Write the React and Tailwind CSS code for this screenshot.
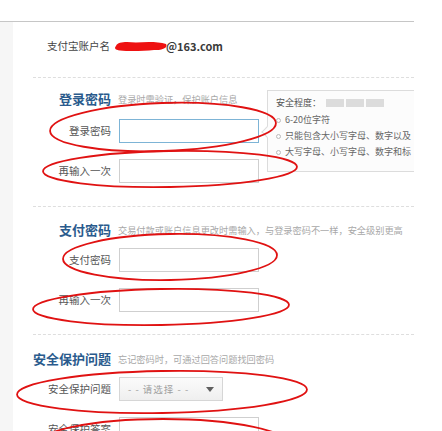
const FONT = '"Noto Sans CJK SC", "Liberation Sans", sans-serif'

function Field({ label, focus, select }) {
  return (
    <div className="flex items-center h-[24px]">
      <span className="w-[98px] shrink-0 text-right text-[10.5px] leading-[14px] text-[#555]">{label}</span>
      {select ? (
        <div className="ml-[8px] w-[104px] h-[24px] border border-[#d6d6d6] bg-gradient-to-b from-[#fbfbfb] to-[#efefef] flex items-center justify-between pl-[8px] pr-[8px]">
          <span className="text-[9.5px] text-[#a0a0a0] tracking-[1px]">- - 请选择 - -</span>
          <span className="w-0 h-0 border-l-[4px] border-r-[4px] border-t-[5px] border-l-transparent border-r-transparent border-t-[#606060]" />
        </div>
      ) : (
        <div className={`ml-[8px] w-[140px] h-[24px] bg-white border ${focus ? 'border-[#7db4d6]' : 'border-[#cfcfcf]'}`} />
      )}
    </div>
  )
}

function Heading({ title, desc }) {
  return (
    <div className="flex items-center h-[16px]">
      <span className="w-[98px] shrink-0 text-right text-[13px] font-bold leading-[16px] text-[#2a5b8d]">{title}</span>
      <span className="ml-[7px] text-[9.2px] leading-[12px] text-[#a8a8a8] whitespace-nowrap">{desc}</span>
    </div>
  )
}

function Dashed() {
  return <div className="ml-[20px] border-t border-dashed border-[#dedede]" />
}

export default function App() {
  return (
    <div className="relative w-[442px] h-[431px] overflow-hidden bg-white pt-[21px]" style={{ fontFamily: FONT }}>
      <div className="w-[414px] h-full border-t border-[#c6c6c6] flex">
        <div className="w-[13px] shrink-0 bg-[#f6f6f6]" />
        <div className="flex-1 overflow-hidden relative">
          {/* account */}
          <div className="h-[55px] pt-[17px] pl-[34px] flex items-start">
            <div className="flex items-center h-[14px]">
              <span className="text-[10.5px] text-[#444]">支付宝账户名</span>
              <svg className="ml-[4px]" width="54" height="12" viewBox="0 0 54 12">
                <path d="M2 6 C4 1 14 2 22 2.5 C32 2 44 1.5 52 4 C54 7 50 10.5 40 10 C30 11 16 11.5 6 10.5 C1 10 0 8 2 6 Z" fill="#ee1111" />
              </svg>
              <span className="text-[11px] font-bold text-[#3a3a3a] -ml-[2px]">@163.com</span>
            </div>
          </div>
          <Dashed />

          {/* login password */}
          <div className="pt-[13px] pb-[23px] relative">
            <Heading title="登录密码" desc="登录时需验证，保护账户信息" />
            <div className="mt-[12px] flex flex-col gap-[16px]">
              <Field label="登录密码" focus />
              <Field label="再输入一次" />
            </div>
            <div className="absolute left-[254px] top-[12px] w-[160px] h-[82px] border border-[#dcdcdc] bg-[#fcfcfc] pl-[8px] pt-[5px]">
              <div className="absolute -left-[5px] top-[37px] w-[8px] h-[8px] rotate-45 bg-[#fcfcfc] border-l border-b border-[#dcdcdc]" />
              <div className="flex items-center h-[14px]">
                <span className="text-[9px] text-[#555]">安全程度：</span>
                <div className="ml-[5px] flex gap-[2px]">
                  <span className="w-[18px] h-[8px] bg-[#dcdcdc]" />
                  <span className="w-[18px] h-[8px] bg-[#dcdcdc]" />
                  <span className="w-[18px] h-[8px] bg-[#dcdcdc]" />
                </div>
              </div>
              <div className="mt-[2px] flex flex-col">
                {['6-20位字符', '只能包含大小写字母、数字以及', '大写字母、小写字母、数字和标'].map((t) => (
                  <div key={t} className="flex items-center h-[16px] whitespace-nowrap">
                    <span className="w-[5px] h-[5px] rounded-full border border-[#bbb]" />
                    <span className="ml-[4px] text-[9px] text-[#666]">{t}</span>
                  </div>
                ))}
              </div>
            </div>
          </div>
          <Dashed />

          {/* pay password */}
          <div className="pt-[15px] pb-[22px]">
            <Heading title="支付密码" desc="交易付款或账户信息更改时需输入，与登录密码不一样，安全级别更高" />
            <div className="mt-[10px] flex flex-col gap-[16px]">
              <Field label="支付密码" />
              <Field label="再输入一次" />
            </div>
          </div>
          <Dashed />

          {/* security question */}
          <div className="pt-[16px]">
            <Heading title="安全保护问题" desc="忘记密码时，可通过回答问题找回密码" />
            <div className="mt-[10px] flex flex-col gap-[16px]">
              <Field label="安全保护问题" select />
              <Field label="安全保护答案" />
            </div>
          </div>
        </div>
      </div>

      {/* hand-drawn marks */}
      <svg className="absolute inset-0 pointer-events-none" width="442" height="431" viewBox="0 0 442 431">
        <g fill="none" stroke="#e01212" strokeWidth="1.8">
          <ellipse cx="163" cy="127" rx="113" ry="24" transform="rotate(-2 163 127)" />
          <ellipse cx="170" cy="169" rx="127" ry="18" transform="rotate(-1 170 169)" />
          <ellipse cx="170" cy="257" rx="107" ry="23" transform="rotate(-1 170 257)" />
          <ellipse cx="161" cy="307" rx="128" ry="18" transform="rotate(-1 161 307)" />
          <ellipse cx="162" cy="392" rx="145" ry="21" transform="rotate(-1 162 392)" />
          <ellipse cx="163" cy="446" rx="128" ry="27" />
        </g>
      </svg>
    </div>
  )
}
